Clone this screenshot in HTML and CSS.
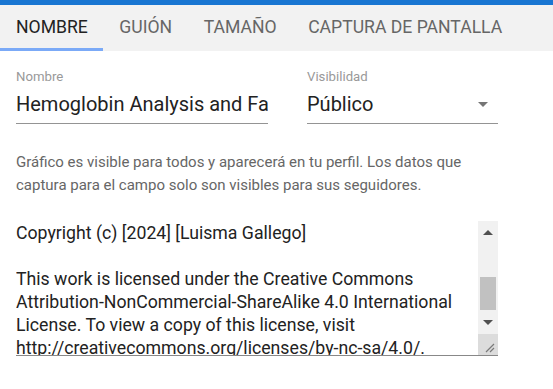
FILE: index.html
```html
<!DOCTYPE html>
<html lang="es">
<head>
    <meta charset="UTF-8">
    <meta name="viewport" content="width=device-width, initial-scale=1.0">
    <title>Gráfico</title>
    <link rel="stylesheet" href="styles.css">
</head>
<body>
    <div class="top-bar"></div>
    <nav class="tabs">
        <div class="tab active">Nombre</div>
        <div class="tab">Guión</div>
        <div class="tab">Tamaño</div>
        <div class="tab">Captura de pantalla</div>
    </nav>

    <main class="content">
        <div class="fields">
            <div class="field field-name">
                <label class="field-label">Nombre</label>
                <div class="field-input">Hemoglobin Analysis and Factors</div>
            </div>
            <div class="field field-select">
                <label class="field-label">Visibilidad</label>
                <div class="field-input">
                    <span>Público</span>
                    <span class="caret"></span>
                </div>
            </div>
        </div>

        <p class="helper">Gráfico es visible para todos y aparecerá en tu perfil. Los datos que captura para el campo solo son visibles para sus seguidores.</p>

        <div class="textarea">
            <div class="ta-text">Copyright (c) [2024] [Luisma Gallego]

This work is licensed under the Creative Commons
Attribution-NonCommercial-ShareAlike 4.0 International
License. To view a copy of this license, visit
http://creativecommons.org/licenses/by-nc-sa/4.0/.</div>
            <div class="scrollbar">
                <div class="sb-btn"><span class="sb-up"></span></div>
                <div class="sb-track"><div class="sb-thumb"></div></div>
                <div class="sb-btn"><span class="sb-down"></span></div>
                <div class="sb-resizer">
                    <svg width="20" height="21" viewBox="0 0 20 21">
                        <path d="M8 18 L16 10 M12 18 L16 14" stroke="#7a7a7a" stroke-width="1.2" fill="none"/>
                    </svg>
                </div>
            </div>
        </div>
    </main>
</body>
</html>
```

FILE: styles.css
```css
/* 基础 */
body {
    margin: 0;
    font-family: Roboto, "Liberation Sans", sans-serif;
    color: rgba(0, 0, 0, 0.87);
    background: #fff;
}
/* 顶部蓝条 */
.top-bar {
    height: 5px;
    background-color: #1976d2;
}
/* 标签栏 */
.tabs {
    display: flex;
    background-color: #f2f2f2;
    height: 46px;
}
.tab {
    padding: 1px 15.5px 0 16px;
    font-size: 17.6px;
    line-height: 42px;
    text-transform: uppercase;
    color: #666;
    border-bottom: 3px solid transparent;
}
.tab.active {
    color: #222;
    border-bottom-color: #7baaf7;
}
/* 内容 */
.content {
    padding: 0 16px;
    width: 482px;
}
.fields {
    display: flex;
    gap: 39px;
    margin-top: 17px;
}
.field-name {
    width: 252px;
}
.field-select {
    width: 191px;
}
.field-label {
    display: block;
    font-size: 13.2px;
    line-height: 17px;
    color: #999;
}
.field-input {
    display: flex;
    align-items: center;
    justify-content: space-between;
    height: 38px;
    font-size: 20px;
    white-space: nowrap;
    overflow: hidden;
    border-bottom: 1px solid #949494;
    color: #222;
}
.caret {
    width: 0;
    height: 0;
    margin-right: 10px;
    border-left: 5px solid transparent;
    border-right: 5px solid transparent;
    border-top: 5px solid #757575;
}
/* 说明文字 */
.helper {
    margin: 27px 0 0;
    font-size: 15px;
    line-height: 22.6px;
    color: #666;
}
/* 文本框 */
.textarea {
    display: flex;
    margin-top: 25px;
    height: 134px;
    border-bottom: 1px solid #888;
}
.ta-text {
    flex: 1;
    overflow: hidden;
    padding-top: 1px;
    font-size: 17.7px;
    line-height: 23px;
    white-space: pre;
    color: #222;
}
/* 滚动条 */
.scrollbar {
    width: 20px;
    display: flex;
    flex-direction: column;
    background-color: #f1f1f1;
}
.sb-btn {
    height: 23px;
    display: flex;
    align-items: center;
    justify-content: center;
}
.sb-up {
    border-left: 5px solid transparent;
    border-right: 5px solid transparent;
    border-bottom: 5px solid #505050;
}
.sb-down {
    border-left: 5px solid transparent;
    border-right: 5px solid transparent;
    border-top: 5px solid #505050;
}
.sb-track {
    flex: 1;
    display: flex;
    flex-direction: column;
    padding: 33px 2px 0;
}
.sb-thumb {
    height: 33px;
    background-color: #c1c1c1;
}
.sb-resizer {
    height: 21px;
    background-color: #dcdcdc;
}
.sb-resizer svg {
    display: block;
}
```
